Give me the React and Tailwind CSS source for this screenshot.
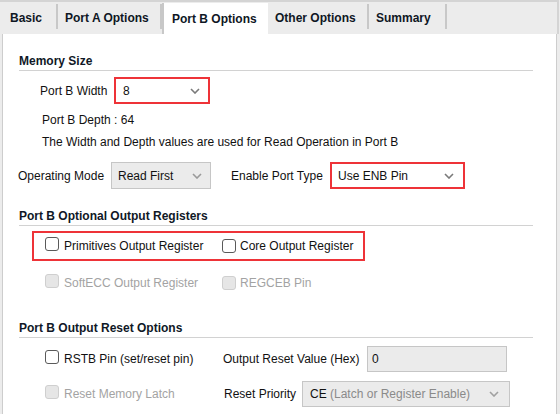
import React from 'react';

const Chevron = ({ color = '#7a7a7a' }) => (
    <svg width="10" height="6" viewBox="0 0 10 6" className="shrink-0">
        <path d="M1 1 L5 5 L9 1" fill="none" stroke={color} strokeWidth="1.6" />
    </svg>
);

const Check = ({ disabled }) => (
    <span
        className={`inline-block w-[14px] h-[14px] rounded-[3px] border shrink-0 ${
            disabled ? 'bg-[#e6e6e6] border-[#cfcfcf]' : 'bg-white border-[#5a5a5a]'
        }`}
    />
);

const Heading = ({ children, className = '' }) => (
    <div className={`ml-[16px] w-[514px] h-[18px] leading-[16px] border-b border-[#d2d2d2] font-bold text-[#101826] ${className}`}>
        {children}
    </div>
);

const tabs = [
    { label: 'Basic', w: 'w-[58px]', pl: 'pl-[10px]' },
    { label: 'Port A Options', w: 'w-[104px]', pl: 'pl-[7px]' },
    { label: 'Port B Options', w: 'w-[106px]', pl: 'pl-[8px]', active: true },
    { label: 'Other Options', w: 'w-[101px]', pl: 'pl-[7px]' },
    { label: 'Summary', w: 'w-[78px]', pl: 'pl-[7px]' },
];

const App = () => {
    return (
        <div className="w-[560px] h-[414px] bg-[#ececec] overflow-hidden text-[12px] text-[#111] font-['Liberation_Sans',Arial,sans-serif]">
            {/* Tabs */}
            <div className="h-[34px] border-t-2 border-[#d4d4d4] border-r-2 w-[559px] flex items-stretch">
                {tabs.map((t) => (
                    <div
                        key={t.label}
                        className={`${t.w} ${t.pl} flex items-center font-bold text-[#0f1724] ${
                            t.active ? 'bg-white border-l-2 border-[#c8c8c8] mt-[1px]' : 'border-r-2 border-[#c8c8c8] my-[2px] mb-[5px] pt-[3px]'
                        }`}
                    >
                        {t.label}
                    </div>
                ))}
            </div>

            {/* Content */}
            <div className="ml-[2px] w-[555px] h-[380px] bg-white border-l border-r border-[#cdcdcd] pt-[19px]">
                <Heading>Memory Size</Heading>

                <div className="mt-[6px] flex items-center h-[27px]">
                    <span className="ml-[37px] w-[74px]">Port B Width</span>
                    <div className="w-[96px] h-[27px] border-2 border-[#ee3338] flex items-center justify-between pl-[7px] pr-[8px]">
                        <span>8</span>
                        <Chevron />
                    </div>
                </div>

                <div className="mt-[9px] ml-[39px] leading-[14px]">Port B Depth : 64</div>
                <div className="mt-[8px] ml-[39px] leading-[14px]">The Width and Depth values are used for Read Operation in Port B</div>

                <div className="mt-[13px] flex items-center h-[27px]">
                    <span className="ml-[15px] w-[93px]">Operating Mode</span>
                    <div className="w-[100px] h-[27px] bg-[#ebebeb] border border-[#c6c6c6] flex items-center justify-between pl-[6px] pr-[8px]">
                        <span>Read First</span>
                        <Chevron color="#9a9a9a" />
                    </div>
                    <span className="ml-[20px] w-[99px]">Enable Port Type</span>
                    <div className="w-[135px] h-[27px] border-2 border-[#ee3338] flex items-center justify-between pl-[6px] pr-[9px]">
                        <span>Use ENB Pin</span>
                        <Chevron />
                    </div>
                </div>

                <Heading className="mt-[19px]">Port B Optional Output Registers</Heading>

                <div className="mt-[5px] ml-[29px] w-[333px] h-[30px] border-2 border-[#ee3338] flex items-center">
                    <span className="ml-[11px]"><Check /></span>
                    <span className="ml-[5px] w-[158px]">Primitives Output Register</span>
                    <Check />
                    <span className="ml-[4px]">Core Output Register</span>
                </div>

                <div className="mt-[14px] flex items-center h-[16px] text-[#a3a3a3]">
                    <span className="ml-[42px]"><Check disabled /></span>
                    <span className="ml-[5px] w-[158px]">SoftECC Output Register</span>
                    <Check disabled />
                    <span className="ml-[4px]">REGCEB Pin</span>
                </div>

                <Heading className="mt-[29px]">Port B Output Reset Options</Heading>

                <div className="mt-[8px] flex items-center h-[26px]">
                    <span className="ml-[42px]"><Check /></span>
                    <span className="ml-[5px] w-[159px]">RSTB Pin (set/reset pin)</span>
                    <span className="w-[144px] whitespace-nowrap">Output Reset Value (Hex)</span>
                    <div className="w-[140px] h-[26px] bg-[#ebebeb] border border-[#c6c6c6] flex items-center pl-[4px]">0</div>
                </div>

                <div className="mt-[9px] flex items-center h-[26px]">
                    <span className="ml-[42px]"><Check disabled /></span>
                    <span className="ml-[5px] w-[160px] text-[#a3a3a3]">Reset Memory Latch</span>
                    <div className="w-[78px] pr-[6px] flex justify-end">
                        <span className="whitespace-nowrap">Reset Priority</span>
                    </div>
                    <div className="w-[208px] h-[26px] bg-[#ebebeb] border border-[#c6c6c6] flex items-center justify-between pl-[7px] pr-[10px]">
                        <span>
                            CE <span className="text-[#8a8a8a]">(Latch or Register Enable)</span>
                        </span>
                        <Chevron color="#a0a0a0" />
                    </div>
                </div>
            </div>
        </div>
    );
};

export default App;
